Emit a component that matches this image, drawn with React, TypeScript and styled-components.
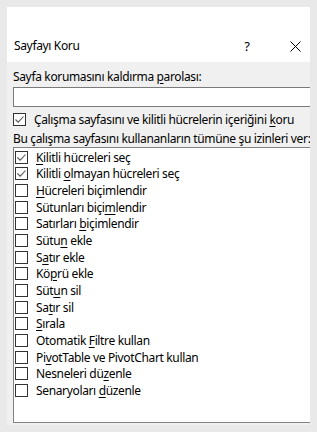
import React from "react";
import styled, { createGlobalStyle } from "styled-components";

const Global = createGlobalStyle`
  html, body { margin: 0; padding: 0; background: #e9e9e9; }
  body { font-family: "Noto Sans", "Open Sans", sans-serif; font-size: 12px; letter-spacing: -0.35px; color: #000; }
  u { text-decoration: underline; text-underline-offset: 2px; }
`;

const Page = styled.div`
  width: 317px;
  height: 432px;
  padding: 7px 0 0 7px;
  box-sizing: border-box;
`;

const Dialog = styled.div`
  width: 303px;
  height: 418px;
  background: #f0f0f0;
  display: flex;
  flex-direction: column;
  overflow: hidden;
`;

const TitleBar = styled.div`
  height: 55px;
  background: #fff;
  display: flex;
  align-items: flex-end;
  padding: 0 0 8px 7px;
  box-sizing: border-box;
`;

const Title = styled.div`
  flex: 1;
  font-size: 12px;
  line-height: 16px;
`;

const TitleButton = styled.div<{ $w: number; $mr?: number }>`
  width: ${(p) => p.$w}px;
  margin-right: ${(p) => p.$mr ?? 0}px;
  height: 16px;
  display: flex;
  align-items: center;
  justify-content: center;
  font-size: 13px;
`;

const Body = styled.div`
  flex: 1;
  display: flex;
  flex-direction: column;
  padding: 7px 0 2px 6px;
  min-height: 0;
`;

const Label = styled.div`
  line-height: 16px;
  white-space: nowrap;
`;

const Input = styled.div`
  margin-top: 2px;
  width: 320px;
  height: 20px;
  flex: none;
  box-sizing: border-box;
  background: #fff;
  border: 1px solid #7a7a7a;
`;

const CheckRow = styled.div<{ $gap: number }>`
  display: flex;
  align-items: center;
  gap: ${(p) => p.$gap}px;
  white-space: nowrap;
`;

const Box = styled.div`
  width: 13px;
  height: 13px;
  box-sizing: border-box;
  border: 1px solid #333;
  background: #fff;
  flex: none;
  display: flex;
  align-items: center;
  justify-content: center;
`;

const MainCheck = styled(CheckRow)`
  margin-top: 4px;
  height: 17px;
  flex: none;
`;

const ListLabel = styled.div`
  margin-top: 2px;
  line-height: 17px;
  white-space: nowrap;
`;

const List = styled.div`
  flex: 1;
  width: 330px;
  background: #fff;
  border: 1px solid #828282;
  box-sizing: border-box;
  padding: 1px 0 0 1px;
`;

const Item = styled(CheckRow)`
  height: 16.65px;
`;

const Check = () => (
  <svg width="11" height="11" viewBox="0 0 11 11">
    <path d="M1.5 5.5 L4.2 8.2 L9.5 2.5" fill="none" stroke="#555" strokeWidth="1.1" />
  </svg>
);

const CheckBox = ({ checked }: { checked?: boolean }) => <Box>{checked && <Check />}</Box>;

const items: [React.ReactNode, boolean][] = [
  [<><u>K</u>ilitli hücreleri seç</>, true],
  [<>Kilitli <u>o</u>lmayan hücreleri seç</>, true],
  [<><u>H</u>ücreleri biçimlendir</>, false],
  [<>Sütunları biçi<u>m</u>lendir</>, false],
  [<>Satırları <u>b</u>içimlendir</>, false],
  [<>Sütu<u>n</u> ekle</>, false],
  [<>S<u>a</u>tır ekle</>, false],
  [<>Kö<u>p</u>rü ekle</>, false],
  [<>Süt<u>u</u>n sil</>, false],
  [<>Sa<u>t</u>ır sil</>, false],
  [<><u>S</u>ırala</>, false],
  [<>Otomatik <u>F</u>iltre kullan</>, false],
  [<>Pi<u>v</u>otTable ve PivotChart kullan</>, false],
  [<>Nesneleri dü<u>z</u>enle</>, false],
  [<>Senaryoları <u>d</u>üzenle</>, false],
];

export default function App() {
  return (
    <Page>
      <Global />
      <Dialog>
        <TitleBar>
          <Title>Sayfayı Koru</Title>
          <TitleButton $w={16} $mr={25}>?</TitleButton>
          <TitleButton $w={30}>
            <svg width="11" height="11" viewBox="0 0 11 11">
              <path d="M0.5 0.5 L10.5 10.5 M10.5 0.5 L0.5 10.5" stroke="#000" strokeWidth="1" />
            </svg>
          </TitleButton>
        </TitleBar>
        <Body>
          <Label>
            Sayfa korumasını kaldırma <u>p</u>arolası:
          </Label>
          <Input />
          <MainCheck $gap={8}>
            <CheckBox checked />
            <span>
              Çalışma sayfasını ve kilitli hücrelerin içeriğini <u>k</u>oru
            </span>
          </MainCheck>
          <ListLabel>Bu çalışma sayfasını kullananların tümüne şu izinleri ver:</ListLabel>
          <List>
            {items.map(([text, checked], i) => (
              <Item key={i} $gap={8}>
                <CheckBox checked={checked} />
                <span>{text}</span>
              </Item>
            ))}
          </List>
        </Body>
      </Dialog>
    </Page>
  );
}
